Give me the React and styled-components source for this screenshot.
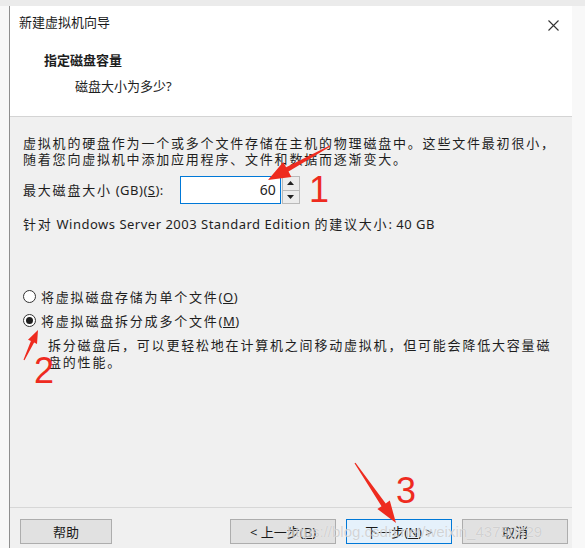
import React from "react";
import styled, { createGlobalStyle } from "styled-components";

const GlobalStyle = createGlobalStyle`
  html, body {
    margin: 0;
    padding: 0;
    background: #f8f8f8;
  }
  body {
    font-family: "Noto Sans", "Noto Sans CJK SC", sans-serif;
    font-size: 13px;
    color: #1e1e1e;
  }
`;

const Page = styled.div`
  position: relative;
  width: 585px;
  height: 548px;
  overflow: hidden;
  background: #f8f8f8;
  display: flex;
  flex-direction: column;
`;

const TopStrip = styled.div`
  height: 6px;
  background: #ebebeb;
  flex-shrink: 0;
`;

const Stage = styled.div`
  flex: 1;
  display: flex;
  padding-left: 9px;
`;

const Dialog = styled.div`
  width: 562px;
  height: 542px;
  border-left: 1px solid #8f8f8f;
  display: flex;
  flex-direction: column;
  background: #f0f0f0;
`;

const Header = styled.div`
  height: 111px;
  box-sizing: border-box;
  background: #fff;
  border-bottom: 1px solid #d4d4d4;
`;

const TitleRow = styled.div`
  display: flex;
  align-items: center;
  justify-content: space-between;
  padding: 7px 13px 0 9px;
  height: 18px;
`;

const Title = styled.div`
  font-size: 13px;
  line-height: 18px;
  color: #1a1a1a;
`;

const CloseIcon = styled.svg`
  width: 11px;
  height: 11px;
  margin-top: 6px;
`;

const Heading = styled.div`
  margin-top: 20px;
  padding-left: 34px;
  font-weight: 700;
  font-size: 13px;
  line-height: 18px;
`;

const SubHeading = styled.div`
  margin-top: 8px;
  padding-left: 65px;
  font-size: 13px;
  line-height: 18px;
`;

const Body = styled.div`
  height: 390px;
  padding: 18px 0 0 13px;
  box-sizing: border-box;
  display: flex;
  flex-direction: column;
  letter-spacing: 0.5px;
`;

const Line = styled.div`
  line-height: ${(p) => p.$lh || 16}px;
  white-space: nowrap;
`;

const Cjk = styled.span`
  letter-spacing: 1.8px;
`;

const SizeRow = styled.div`
  margin-top: 9px;
  display: flex;
  align-items: center;
  gap: 16px;
  height: 28px;
`;

const SpinBox = styled.div`
  display: flex;
  height: 28px;
`;

const NumberField = styled.div`
  width: 99px;
  height: 26px;
  border: 1px solid #0078d7;
  background: #fff;
  text-align: right;
  font-size: 14px;
  line-height: 26px;
  letter-spacing: 0;
  color: #222;
  & > span { margin-right: 4px; }
`;

const Spinner = styled.div`
  width: 18px;
  display: flex;
  flex-direction: column;
  margin-left: 1px;
`;

const SpinButton = styled.div`
  flex: 1;
  border: 1px solid #b9b9b9;
  background: #ececec;
  display: flex;
  align-items: center;
  justify-content: center;
  & + & { border-top: none; }
`;

const Recommend = styled(Line)`
  margin-top: 12px;
`;

const RadioGroup = styled.div`
  margin-top: 56px;
  display: flex;
  flex-direction: column;
  gap: 8px;
`;

const RadioRow = styled.label`
  display: flex;
  align-items: center;
  gap: 5px;
  height: 16px;
  white-space: nowrap;
`;

const RadioDot = styled.span`
  width: 11px;
  height: 11px;
  border-radius: 50%;
  border: 1px solid #333;
  background: #fff;
  position: relative;
  flex-shrink: 0;
  &::after {
    content: "";
    display: ${(p) => (p.$checked ? "block" : "none")};
    position: absolute;
    left: 2px;
    top: 2px;
    width: 7px;
    height: 7px;
    border-radius: 50%;
    background: #1f1f1f;
  }
`;

const Underline = styled.span`
  text-decoration: underline;
`;

const Description = styled.div`
  margin-top: 9px;
  padding-left: 25px;
`;

const Footer = styled.div`
  flex: 1;
  border-top: 1px solid #d7d7d7;
  display: flex;
  align-items: flex-start;
  padding: 11px 4px 0 10px;
`;

const Button = styled.div`
  width: ${(p) => p.$w || 106}px;
  height: 25px;
  box-sizing: border-box;
  border: 1px solid ${(p) => (p.$primary ? "#0078d7" : "#adadad")};
  background: ${(p) => (p.$primary ? "#e5f1fb" : "#e1e1e1")};
  display: flex;
  align-items: center;
  justify-content: center;
  font-size: 13px;
  color: #1a1a1a;
  margin-left: ${(p) => p.$ml || 0}px;
  white-space: nowrap;
`;

const Spacer = styled.div`
  flex: 1;
`;

const Overlay = styled.svg`
  position: absolute;
  left: 0;
  top: 0;
  width: 585px;
  height: 548px;
  pointer-events: none;
`;

const Mark = styled.span`
  position: absolute;
  left: ${(p) => p.$x}px;
  top: ${(p) => p.$y}px;
  font-family: "Liberation Sans", sans-serif;
  font-size: 36px;
  line-height: 36px;
  color: #ee2b1f;
`;

const Watermark = styled.span`
  position: absolute;
  left: 287px;
  top: 523px;
  font-family: "Liberation Sans", sans-serif;
  font-size: 15px;
  color: rgba(185, 185, 185, 0.6);
  text-shadow: 0 0 1px rgba(255, 255, 255, 0.8);
  pointer-events: none;
  white-space: nowrap;
`;

// splits text so only the CJK runs get the wide spacing
function Spaced({ children }) {
  const parts = children.split(/([\u3000-\u303f\u4e00-\u9fff\uff00-\uffef]+)/);
  return parts.map((t, i) =>
    i % 2 === 1 ? <Cjk key={i}>{t}</Cjk> : <React.Fragment key={i}>{t}</React.Fragment>
  );
}

function arrowPoints(x1, y1, x2, y2, headLen, headW, shaftW) {
  const L = Math.hypot(x2 - x1, y2 - y1);
  const ux = (x2 - x1) / L;
  const uy = (y2 - y1) / L;
  const px = -uy;
  const py = ux;
  const bx = x2 - ux * headLen;
  const by = y2 - uy * headLen;
  const pts = [
    [x1 + px * 0.6, y1 + py * 0.6],
    [bx + (px * shaftW) / 2, by + (py * shaftW) / 2],
    [bx + (px * headW) / 2, by + (py * headW) / 2],
    [x2, y2],
    [bx - (px * headW) / 2, by - (py * headW) / 2],
    [bx - (px * shaftW) / 2, by - (py * shaftW) / 2],
    [x1 - px * 0.6, y1 - py * 0.6],
  ];
  return pts.map((p) => p.map((v) => v.toFixed(1)).join(",")).join(" ");
}

export default function App() {
  return (
    <>
      <GlobalStyle />
      <Page>
        <TopStrip />
        <Stage>
          <Dialog>
            <Header>
              <TitleRow>
                <Title>新建虚拟机向导</Title>
                <CloseIcon viewBox="0 0 11 11">
                  <path d="M0.5 0.5 L10.5 10.5 M10.5 0.5 L0.5 10.5" stroke="#333" strokeWidth="1.1" />
                </CloseIcon>
              </TitleRow>
              <Heading>指定磁盘容量</Heading>
              <SubHeading>磁盘大小为多少?</SubHeading>
            </Header>
            <Body>
              <Line>
                <Spaced>虚拟机的硬盘作为一个或多个文件存储在主机的物理磁盘中。这些文件最初很小，</Spaced>
              </Line>
              <Line>
                <Spaced>随着您向虚拟机中添加应用程序、文件和数据而逐渐变大。</Spaced>
              </Line>
              <SizeRow>
                <Line>
                  <Spaced>最大磁盘大小</Spaced> (GB)(<Underline>S</Underline>):
                </Line>
                <SpinBox>
                  <NumberField>
                    <span>60</span>
                  </NumberField>
                  <Spinner>
                    <SpinButton>
                      <svg width="7" height="4" viewBox="0 0 7 4">
                        <path d="M0 4 L3.5 0 L7 4 Z" fill="#222" />
                      </svg>
                    </SpinButton>
                    <SpinButton>
                      <svg width="7" height="4" viewBox="0 0 7 4">
                        <path d="M0 0 L3.5 4 L7 0 Z" fill="#222" />
                      </svg>
                    </SpinButton>
                  </Spinner>
                </SpinBox>
              </SizeRow>
              <Recommend>
                <Spaced>针对 Windows Server 2003 Standard Edition 的建议大小</Spaced>: 40 GB
              </Recommend>
              <RadioGroup>
                <RadioRow>
                  <RadioDot />
                  <span>
                    <Spaced>将虚拟磁盘存储为单个文件</Spaced>(<Underline>O</Underline>)
                  </span>
                </RadioRow>
                <RadioRow>
                  <RadioDot $checked />
                  <span>
                    <Spaced>将虚拟磁盘拆分成多个文件</Spaced>(<Underline>M</Underline>)
                  </span>
                </RadioRow>
              </RadioGroup>
              <Description>
                <Line $lh={17}>
                  <Spaced>拆分磁盘后，可以更轻松地在计算机之间移动虚拟机，但可能会降低大容量磁</Spaced>
                </Line>
                <Line $lh={17}>
                  <Spaced>盘的性能。</Spaced>
                </Line>
              </Description>
            </Body>
            <Footer>
              <Button $w={92}>帮助</Button>
              <Spacer />
              <Button $w={106}>
                &lt; 上一步(<Underline>B</Underline>)
              </Button>
              <Button $w={106} $ml={10} $primary>
                下一步(<Underline>N</Underline>) &gt;
              </Button>
              <Button $w={106} $ml={10}>
                取消
              </Button>
            </Footer>
          </Dialog>
        </Stage>
        <Watermark>https://blog.csdn.net/weixin_43750429</Watermark>
        <Overlay viewBox="0 0 585 548">
          <polygon points={arrowPoints(330, 146, 268, 180, 22, 17, 5)} fill="#ee2b1f" />
          <polygon points={arrowPoints(24, 360, 38, 330, 13, 10, 3.5)} fill="#ee2b1f" />
          <polygon points={arrowPoints(355, 463, 396, 523, 22, 15, 5)} fill="#ee2b1f" />
        </Overlay>
        <Mark $x={309} $y={172}>1</Mark>
        <Mark $x={34} $y={353}>2</Mark>
        <Mark $x={396} $y={473}>3</Mark>
      </Page>
    </>
  );
}
